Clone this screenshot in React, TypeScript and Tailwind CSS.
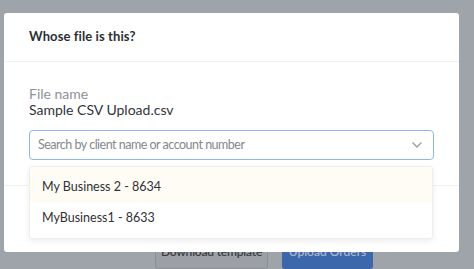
import React from "react";

export default function App() {
  return (
    <div className="relative h-[269px] w-[474px] overflow-hidden bg-[#9fa3aa] font-['Lato',sans-serif]">
      <div className="relative z-10 ml-[4px] mt-[13px] flex h-[239px] w-[455px] flex-col rounded-[3px] bg-white">
        <div className="flex h-[49px] items-center border-b border-[#eff0f1] px-[25px]">
          <span className="text-[13px] font-bold tracking-[0.1px] text-[#2b2e33]">Whose file is this?</span>
        </div>
        <div className="px-[25px] pt-[24px]">
          <div className="text-[14px] leading-[16px] text-[#8e9299]">File name</div>
          <div className="text-[14px] leading-[16px] text-[#333538]">Sample CSV Upload.csv</div>
          <div className="mt-[12px] flex h-[30px] items-center justify-between rounded-[4px] border border-[#8fb6ea] px-[8px]">
            <span className="text-[12.5px] tracking-[-0.5px] text-[#85888d]">Search by client name or account number</span>
            <svg width="12" height="8" viewBox="0 0 12 8" className="mr-[2px]">
              <path d="M1.5 1.5 L6 6 L10.5 1.5" fill="none" stroke="#9a9da2" strokeWidth="1.4" />
            </svg>
          </div>
        </div>
        <div className="mt-[25px] border-t border-[#eff0f1]" />
        <div className="absolute left-[25px] top-[153px] w-[404px] overflow-hidden rounded-[3px] border border-[#eeeeee] bg-white shadow-[0_2px_6px_rgba(0,0,0,0.08)]">
          <div className="flex h-[35px] items-center bg-[#fffcf6] pl-[12px] pt-[5px] text-[12.5px] text-[#2f3134]">
            My Business 2 - 8634
          </div>
          <div className="flex h-[36px] items-center pb-[3px] pl-[12px] text-[12.5px] text-[#2f3134]">
            MyBusiness1 - 8633
          </div>
        </div>
      </div>
      <div className="relative z-0 -mt-[17px] flex pl-[155px]">
        <div className="flex h-[34px] w-[113px] items-center justify-center whitespace-nowrap rounded-[3px] border border-[#8c9096] bg-[#9ca0a6] text-[12px] font-semibold tracking-[-0.2px] text-[#3a3c40]">
          Download template
        </div>
        <div className="ml-[14px] flex h-[34px] w-[91px] items-center justify-center whitespace-nowrap rounded-[3px] bg-[#3d67ab] text-[12px] font-semibold text-[#a9b6cc]">
          Upload Orders
        </div>
      </div>
    </div>
  );
}
